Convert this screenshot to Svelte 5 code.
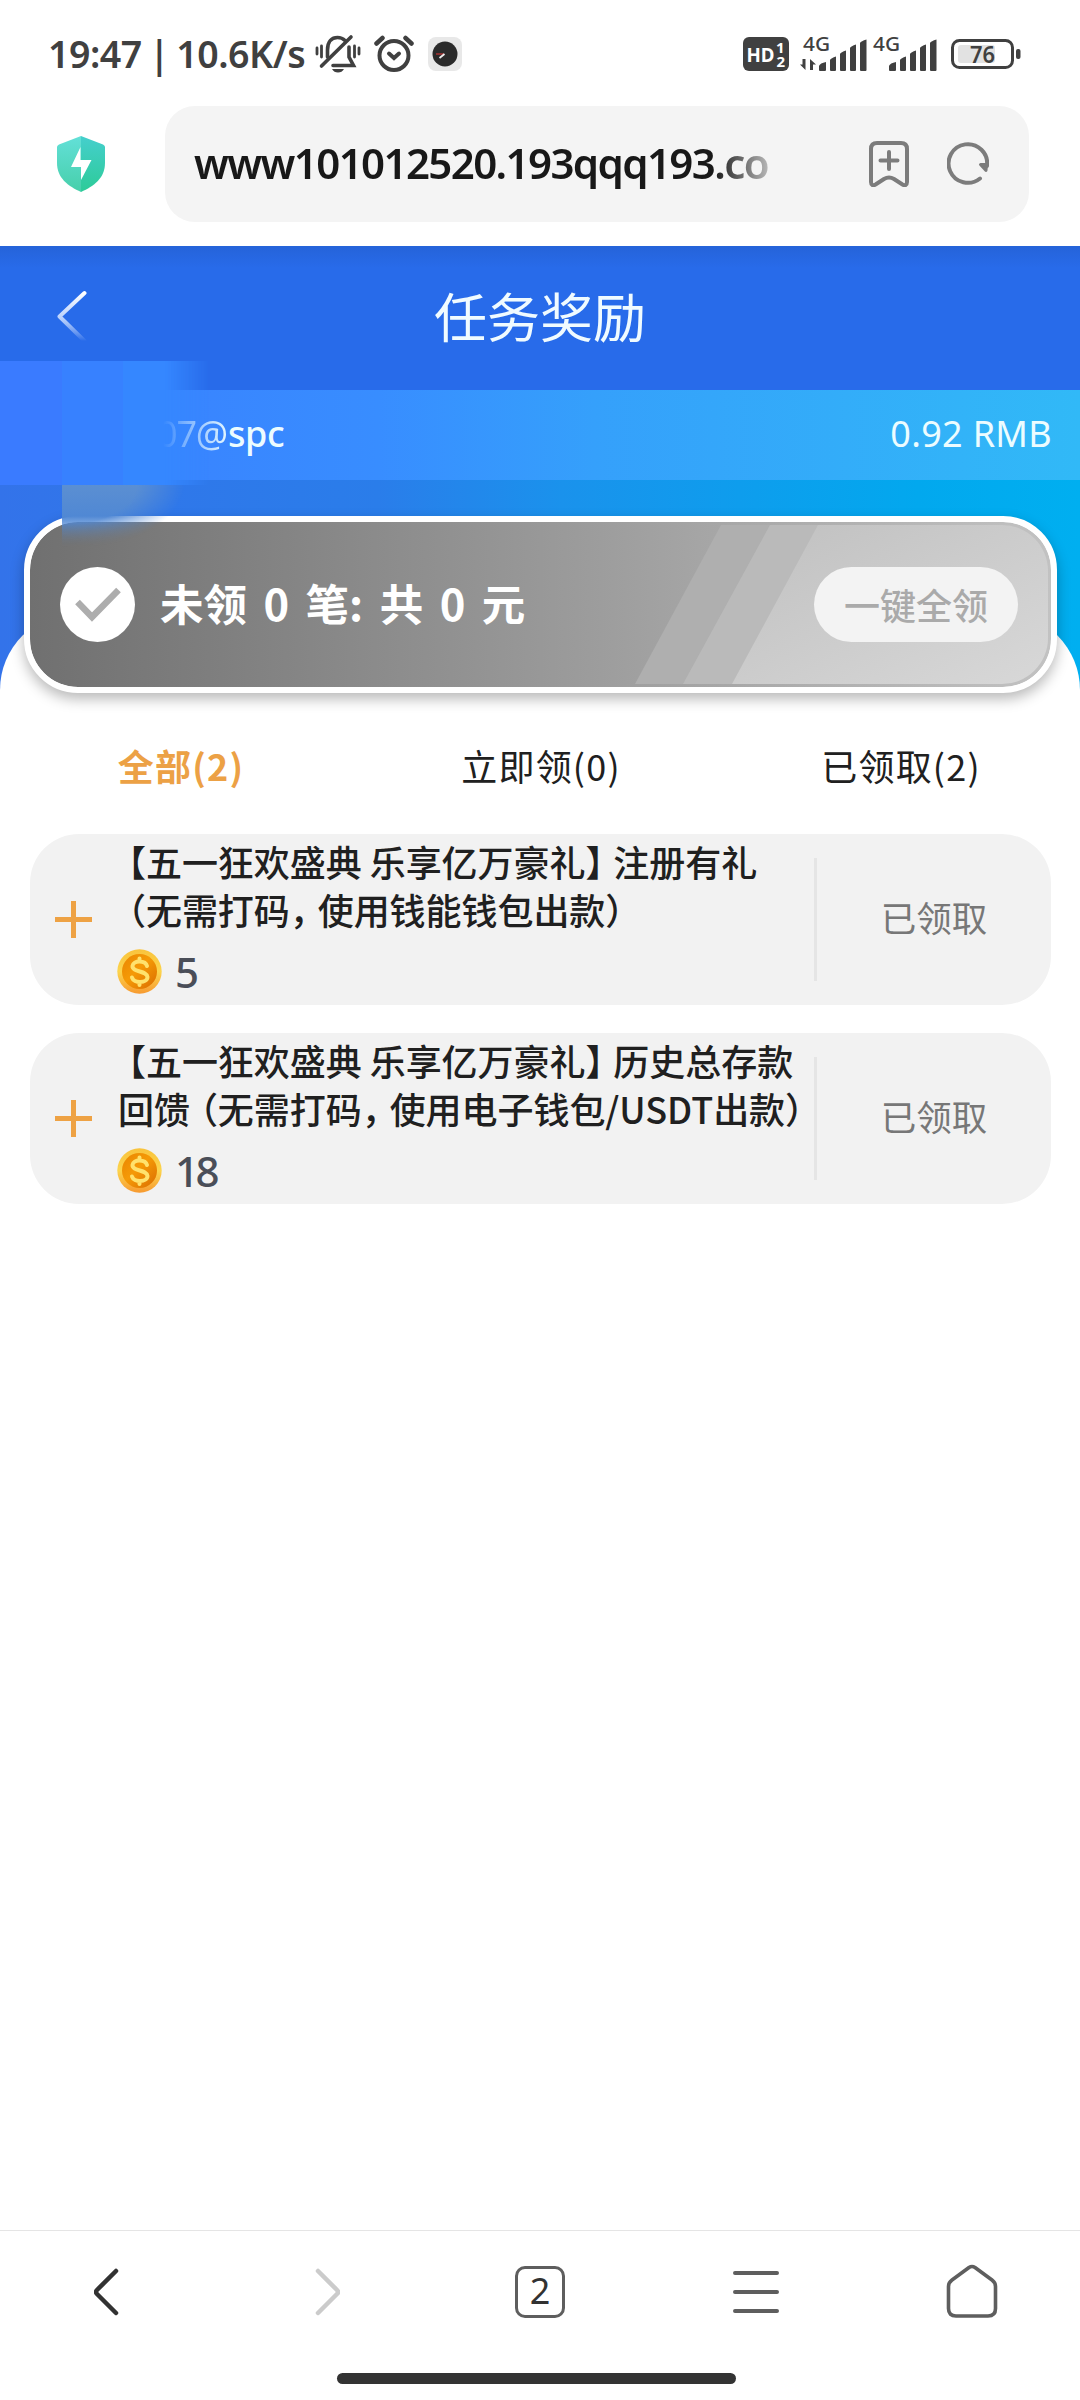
<script lang="ts">
  interface Reward {
    id: number;
    lines: string[];
    amount: number;
  }

  const rewards: Reward[] = [
    { id: 1, lines: ["【五一狂欢盛典 乐享亿万豪礼】注册有礼", "（无需打码，使用钱能钱包出款）"], amount: 5 },
    { id: 2, lines: ["【五一狂欢盛典 乐享亿万豪礼】历史总存款", "回馈（无需打码，使用电子钱包/USDT出款）"], amount: 18 },
  ];

  const tabs = ["全部(2)", "立即领(0)", "已领取(2)"];
  let active = $state(0);

  // full-width punctuation is set tighter than the ideographs around it
  function pieces(line: string) {
    return line.split(/([【（】），])/).filter(Boolean).map(text => ({
      text,
      kind: "【（".includes(text) ? "open" : "】），".includes(text) ? "close" : "",
    }));
  }
</script>

{#snippet signal(arrows: boolean)}
  <svg class="signal" width="68" height="48" viewBox="0 -6 68 48">
    <text x="3" y="15" font-size="20" font-weight="500" textLength="27" lengthAdjust="spacingAndGlyphs">4G</text>
    {#if arrows}
      <path d="M5.500 23v11L0 28.500h2.500V23zM10 34V23l6 5.500h-3V34z" />
    {/if}
    <path d="M19 34v-4q1-3 7-4v8q0 1-1 1h-5q-1 0-1-1zM30 34V24q1-2 6-3.500V34q0 1-1 1h-4q-1 0-1-1zM40 34V18q1-2 6-3.500V34q0 1-1 1h-4q-1 0-1-1zM50 34V12q1-2 6-3.500V34q0 1-1 1h-4q-1 0-1-1zM60 34V7q1-2 6.500-3.500V34q0 1-1 1h-4.500q-1 0-1-1z" />
  </svg>
{/snippet}

<div class="screen">
  <div class="status">
    <span class="time">19:47 | 10.6K/s</span>
    <svg class="bell" width="46" height="40" viewBox="0 0 46 40" fill="none" stroke="#404040" stroke-width="3.600" stroke-linecap="round">
      <path d="M2 14v6M6.500 12v11M39.500 12v11M44 14v6" stroke-width="2.800" />
      <path d="M12.500 23v-7C12.500 7 17 3.500 22.500 3.500c3 0 5.500 1 7.500 3M34 13v10l4.500 8.500H18" />
      <path d="M36 3 6.500 32" />
      <path d="M17 35h12q-2 3.500-6 3.500T17 35z" fill="#404040" stroke="none" />
    </svg>
    <svg class="alarm" width="40" height="38" viewBox="0 0 40 38" fill="none" stroke="#404040" stroke-width="4" stroke-linecap="round">
      <circle cx="20" cy="20.500" r="14.500" />
      <path d="m2.500 8.500 6-5.500M37.500 8.500l-6-5.500" stroke-width="4.500" />
      <path d="m15 18.500 5 4.500 5-4.500" />
    </svg>
    <svg class="clock" width="34" height="34" viewBox="0 0 34 34">
      <rect width="34" height="34" rx="8" fill="#e8e8e8" />
      <circle cx="17" cy="17" r="12.500" fill="#2b2b2b" />
      <path d="M8 17h8" stroke="#a33" stroke-width="1.500" />
      <path d="m11.500 21 5-4" stroke="#eee" stroke-width="1.800" />
    </svg>
    <svg class="hd" width="46" height="34" viewBox="0 0 46 34">
      <rect width="46" height="34" rx="6" fill="#404040" />
      <text x="3.500" y="24.500" fill="#fff" font-size="20" font-weight="700" textLength="28" lengthAdjust="spacingAndGlyphs">HD</text>
      <text x="33" y="15.500" fill="#fff" font-size="15" font-weight="700">1</text>
      <text x="33.500" y="30" fill="#fff" font-size="15" font-weight="700">2</text>
    </svg>
    {@render signal(true)}
    {@render signal(false)}
    <svg class="battery" width="70" height="30" viewBox="0 0 70 30">
      <rect x="7" y="6" width="37" height="18" rx="3" fill="#e2e2e2" />
      <rect x="1.500" y="1.500" width="60" height="27" rx="7" fill="none" stroke="#404040" stroke-width="3" />
      <rect x="65" y="10" width="4.500" height="10" rx="2" fill="#404040" />
      <text x="19" y="23.500" font-size="23" font-weight="600" textLength="25" lengthAdjust="spacingAndGlyphs">76</text>
    </svg>
  </div>

  <div class="address">
    <svg class="shield" width="48" height="56" viewBox="0 0 48 56">
      <defs>
        <linearGradient id="shieldLeft" x2="0" y2="1"><stop stop-color="#63e0d8" /><stop offset="1" stop-color="#47cfaa" /></linearGradient>
        <linearGradient id="shieldRight" x2="0" y2="1"><stop stop-color="#45cfcd" /><stop offset="1" stop-color="#2dcb98" /></linearGradient>
      </defs>
      <path d="M24 0 2 8.500Q0 9.500 0 11v16c0 15 11 23 24 29z" fill="url(#shieldLeft)" />
      <path d="m24 0 22 8.500q2 1 2 2.500v16c0 15-11 23-24 29z" fill="url(#shieldRight)" />
      <path d="M23.500 11 14 31h10v13l10.500-20H23.500z" fill="#fff" />
    </svg>
    <div class="url-box">
      <span class="url">www101012520.193qqq193.co</span>
      <svg width="42" height="46" viewBox="0 0 42 46" fill="none" stroke="#7c7c7c" stroke-width="4" stroke-linecap="round" stroke-linejoin="round">
        <path d="M9 2h24q6 0 6 6v33c0 3-2 4-4.500 2.500L26 38q-5-3-10 0l-8.500 5.500C5 45 3 44 3 41V8q0-6 6-6z" />
        <path d="M21 11v17M12.500 19.500h17" />
      </svg>
      <svg class="reload" width="42" height="44" viewBox="0 0 42 44" fill="none" stroke="#7c7c7c" stroke-width="4" stroke-linecap="round">
        <path d="M33 36.500A19.300 19.300 0 1 1 40 24" />
        <path d="M33.500 22.500h6l-.5 6z" stroke-width="3" fill="#7c7c7c" stroke-linejoin="round" />
      </svg>
    </div>
  </div>

  <header>
    <svg class="back" width="32" height="54" viewBox="0 0 32 54" fill="none">
      <defs>
        <linearGradient id="fade" gradientUnits="userSpaceOnUse" x1="0" y1="4" x2="0" y2="52">
          <stop stop-color="#fff" /><stop offset=".55" stop-color="#cfe0ff" stop-opacity=".85" /><stop offset="1" stop-color="#fff" stop-opacity="0" />
        </linearGradient>
      </defs>
      <path d="M28.500 4 3.500 27.500 28.500 52" stroke="url(#fade)" stroke-width="4" stroke-linecap="round" stroke-linejoin="round" />
    </svg>
    <h1>任务奖励</h1>
  </header>

  <section class="hero">
    <div class="account">
      <span class="user"><span class="hidden-part">07@</span>spc</span>
      <span class="balance">0.92 RMB</span>
    </div>
    <div class="mask"></div>
    <div class="sheet-top"></div>
    <div class="summary">
      <svg class="stripes" width="415" height="159" viewBox="0 0 415 159">
        <defs>
          <linearGradient id="sheen" x2="1" y2="1"><stop stop-color="#c0c0c0" /><stop offset="1" stop-color="#d8d8d8" /></linearGradient>
        </defs>
        <path d="M88 0h50L52 159H2z" fill="#afafaf" />
        <path d="M137 0h50L101 159H50z" fill="#bababa" />
        <path d="M185 0h230v159H99z" fill="url(#sheen)" />
      </svg>
      <svg class="check" width="75" height="75" viewBox="0 0 75 75">
        <circle cx="37.500" cy="37.500" r="37.500" fill="#fff" />
        <path d="m17.500 35 14.500 15L58.500 23" fill="none" stroke="#adadad" stroke-width="6.500" />
      </svg>
      <span class="count">未领 0 笔: 共 0 元</span>
      <button>一键全领</button>
    </div>
    <div class="smudge"></div>
  </section>

  <main>
    <nav class="tabs">
      {#each tabs as tab, i}
        <span class="tab" class:active={active === i}>{tab}</span>
      {/each}
    </nav>

    {#each rewards as reward (reward.id)}
      <article class="reward">
        <svg class="plus" width="37" height="37" viewBox="0 0 37 37" stroke="#eea244" stroke-width="5">
          <path d="M0 18.500h37M18.500 0v37" />
        </svg>
        <div class="info">
          {#each reward.lines as line}
            <div class="line">{#each pieces(line) as piece}<span class={piece.kind}>{piece.text}</span>{/each}</div>
          {/each}
          <div class="amount">
            <svg width="45" height="45" viewBox="0 0 45 45">
              <defs>
                <linearGradient id="rim{reward.id}" x2="0" y2="1"><stop stop-color="#f9c33c" /><stop offset=".5" stop-color="#fcd44d" /><stop offset="1" stop-color="#f79a30" /></linearGradient>
                <linearGradient id="core{reward.id}" x2="1" y2="1"><stop stop-color="#e98500" /><stop offset=".45" stop-color="#f59a07" /><stop offset="1" stop-color="#da6c00" /></linearGradient>
              </defs>
              <circle cx="22.500" cy="22.500" r="22.200" fill="url(#rim{reward.id})" />
              <circle cx="22.500" cy="22.500" r="17.500" fill="url(#core{reward.id})" />
              <path d="M30 17C28.500 11 16 11 15.500 17c-.5 6.500 14.500 4.500 15 11C30.500 34.500 16.500 34.500 15 28.500M22.500 9.500v3M22.500 33v3" fill="none" stroke="#ffe26d" stroke-width="4" stroke-linecap="round" />
            </svg>
            <span>{reward.amount}</span>
          </div>
        </div>
        <div class="state">已领取</div>
      </article>
    {/each}
  </main>

  <footer>
    <div class="toolbar">
      <svg width="28" height="56" viewBox="0 0 28 56" fill="none" stroke="#323232" stroke-width="4.500" stroke-linecap="round">
        <path d="M22 7 3 26q-2 2 0 4l19 19" />
      </svg>
      <svg class="forward" width="28" height="56" viewBox="0 0 28 56" fill="none" stroke="#cbcbcb" stroke-width="4.500" stroke-linecap="round">
        <path d="m6 7 19 19q2 2 0 4L6 49" />
      </svg>
      <span class="pages">2</span>
      <svg width="46" height="56" viewBox="0 0 46 56" stroke="#5e5e5e" stroke-width="4" stroke-linecap="round">
        <path d="M2 9h42M2 28h42M2 47h42" />
      </svg>
      <svg width="52" height="56" viewBox="0 0 52 56" fill="none" stroke="#5e5e5e" stroke-width="3.600" stroke-linejoin="round">
        <path d="M23 3.500q3-2 6 0l17 12.500q3.500 2.500 3.500 6.500v22q0 7.500-7.500 7.500H10q-7.500 0-7.500-7.500v-22Q2.500 18.500 6 16z" />
      </svg>
    </div>
    <div class="home-bar"></div>
  </footer>
</div>

<style>
  :global(body) {
    background: #fff;
  }

  .screen {
    width: 1080px;
    height: 2400px;
    display: flex;
    flex-direction: column;
    overflow: hidden;
    background: #fff;
    color: #202020;
    font-family: "Noto Sans", "Noto Sans CJK SC", sans-serif;
    font-size: 36px;
  }

  svg {
    display: block;
    flex: none;
  }

  .status {
    height: 106px;
    box-sizing: border-box;
    padding: 1px 60px 0 48px;
    display: flex;
    align-items: center;
    color: #404040;
    fill: #404040;
  }

  .time {
    width: 267px;
    font-size: 37.5px;
    font-weight: 600;
    letter-spacing: -0.5px;
    word-spacing: -2px;
    white-space: nowrap;
  }

  .alarm {
    margin-left: 13px;
  }

  .clock {
    margin-left: 14px;
    margin-right: auto;
  }

  .hd {
    margin-right: 11px;
  }

  .signal {
    margin-right: 2px;
  }

  .battery {
    margin-left: 11px;
    margin-right: -1px;
  }

  .address {
    height: 140px;
    display: flex;
    padding: 0 51px 0 57px;
  }

  .shield {
    margin: 30px 60px 0 0;
  }

  .url-box {
    flex: 1;
    height: 116px;
    box-sizing: border-box;
    padding: 0 40px 0 29px;
    display: flex;
    align-items: center;
    border-radius: 30px;
    background: #f4f4f4;
  }

  .url {
    width: 582px;
    margin: -4px auto 0 0;
    overflow: hidden;
    color: #181818;
    font-size: 42px;
    font-weight: 600;
    letter-spacing: -1.6px;
    white-space: nowrap;
    mask-image: linear-gradient(90deg, #000 520px, transparent 595px);
  }

  .reload {
    margin-left: 37px;
  }

  header {
    position: relative;
    height: 144px;
    box-sizing: border-box;
    padding-top: 4px;
    flex: none;
    display: flex;
    align-items: center;
    justify-content: center;
    background: linear-gradient(#2563d9, #286bea 22px);
    color: #f0fbff;
  }

  .back {
    position: absolute;
    left: 56px;
    top: 43px;
  }

  h1 {
    margin: -4px 0 0;
    font-size: 53px;
    font-weight: 400;
    line-height: 60px;
  }

  .hero {
    position: relative;
    height: 303px;
    flex: none;
    background: linear-gradient(90deg, #3373ea 0, #2a7dea 35%, #1a92ec 52%, #02a8ee 85%, #00aff0);
  }

  .account {
    height: 90px;
    box-sizing: border-box;
    padding: 0 28px 3px 157px;
    display: flex;
    align-items: center;
    justify-content: space-between;
    background: linear-gradient(90deg, #3a7dff, #388dff 35%, #35a0fb 55%, #31b9f7);
    color: #ecfcff;
    font-size: 36px;
  }

  .user {
    position: relative;
    z-index: 2;
    font-weight: 500;
    letter-spacing: -0.4px;
  }

  /* the name fades out under the smear */
  .hidden-part {
    margin-right: 1px;
    font-weight: 400;
    letter-spacing: -1.2px;
    color: transparent;
    background: linear-gradient(90deg, transparent 6px, rgba(236, 252, 255, 0.35) 26px, rgba(236, 252, 255, 0.95));
    background-clip: text;
  }

  .balance {
    letter-spacing: 0.3px;
  }

  .mask {
    position: absolute;
    left: 0;
    top: -29px;
    width: 215px;
    height: 124px;
    background: linear-gradient(90deg, #3a7bff 62px, #3781ff 62px, #3781ff 123px, #3587ff 123px);
    mask-image: linear-gradient(90deg, #000 165px, transparent 210px);
  }

  .sheet-top {
    position: absolute;
    left: 0;
    right: 0;
    bottom: 0;
    height: 80px;
    border-radius: 77px 77px 0 0;
    background: #fff;
  }

  .summary {
    position: absolute;
    left: 24px;
    top: 126px;
    width: 1033px;
    height: 177px;
    box-sizing: border-box;
    display: flex;
    align-items: center;
    padding: 0 33px 0 30px;
    border: 6px solid #fff;
    border-radius: 54px;
    background: linear-gradient(90deg, #707070, #989898 50%, #c2c2c2) padding-box, #fff;
    box-shadow: 0 6px 14px rgba(0, 0, 0, 0.28);
  }

  .stripes {
    position: absolute;
    right: 3px;
    top: 3px;
    border-radius: 0 46px 46px 0;
  }

  .check,
  .count,
  button {
    position: relative;
  }

  .count {
    margin: -3px auto 0 25px;
    color: #fff;
    font-family: "Noto Sans CJK SC", sans-serif;
    font-size: 43.5px;
    font-weight: 700;
    line-height: 60px;
    word-spacing: 6.6px;
    white-space: nowrap;
  }

  button {
    width: 204px;
    height: 75px;
    padding: 0;
    border: 0;
    border-radius: 38px;
    background: #f3f3f3;
    color: #aaa;
    font-family: "Noto Sans CJK SC", sans-serif;
    font-size: 36px;
    font-weight: 500;
    line-height: 73px;
  }

  .smudge {
    position: absolute;
    left: 62px;
    top: 95px;
    width: 125px;
    height: 62px;
    background: linear-gradient(#5b8fd2, #5088d4 50%, rgba(80, 136, 212, 0));
    mask-image: radial-gradient(ellipse 125px 66px at 0 0, #000 60%, transparent 98%);
  }

  main {
    flex: 1;
    padding: 0 29px 0 30px;
  }

  .tabs {
    display: grid;
    grid-template-columns: repeat(3, 360px);
    height: 141px;
    box-sizing: border-box;
    padding: 42px 0 0 1px;
    margin: 0 -30px;
    text-align: center;
    font-family: "Noto Sans CJK SC", sans-serif;
    font-size: 36px;
    line-height: 60px;
    letter-spacing: 1.2px;
  }

  .active {
    color: #eca145;
    font-weight: 700;
  }

  .reward {
    height: 171px;
    margin-bottom: 28px;
    display: flex;
    align-items: center;
    border-radius: 49px;
    background: #f2f2f2;
  }

  .plus {
    margin-left: 25px;
  }

  .info {
    margin-left: 26px;
    align-self: flex-start;
    padding-top: 3px;
  }

  .line {
    height: 48px;
    font-family: "Noto Sans CJK SC", sans-serif;
    font-size: 36px;
    font-weight: 500;
    line-height: 48px;
    letter-spacing: -0.05px;
    white-space: nowrap;
  }

  .open {
    margin-left: -8px;
  }

  .close {
    margin-right: -8px;
  }

  .amount {
    display: flex;
    align-items: center;
    gap: 13px;
    height: 45px;
    margin: 16px 0 0 -1px;
    color: #4a4e58;
    font-size: 42px;
    font-weight: 500;
    line-height: 43px;
    letter-spacing: -3.5px;
  }

  .state {
    flex: none;
    width: 237px;
    height: 123px;
    box-sizing: border-box;
    margin-left: auto;
    border-left: 3px solid #e5e5e5;
    color: #777;
    font-family: "Noto Sans CJK SC", sans-serif;
    font-size: 35.5px;
    line-height: 118px;
    text-align: center;
  }

  footer {
    height: 170px;
    box-sizing: border-box;
    border-top: 1px solid #e5e5e5;
  }

  .toolbar {
    height: 122px;
    display: grid;
    grid-template-columns: repeat(5, 216px);
    place-items: center;
  }

  .forward {
    margin-left: 4px;
  }

  .pages {
    width: 50px;
    height: 52px;
    box-sizing: border-box;
    border: 3.5px solid #5e5e5e;
    border-radius: 10px;
    color: #323232;
    font-size: 36px;
    line-height: 44px;
    text-align: center;
  }

  .home-bar {
    width: 399px;
    height: 11px;
    margin: 20px auto 0 337px;
    border-radius: 6px;
    background: #333;
  }
</style>
